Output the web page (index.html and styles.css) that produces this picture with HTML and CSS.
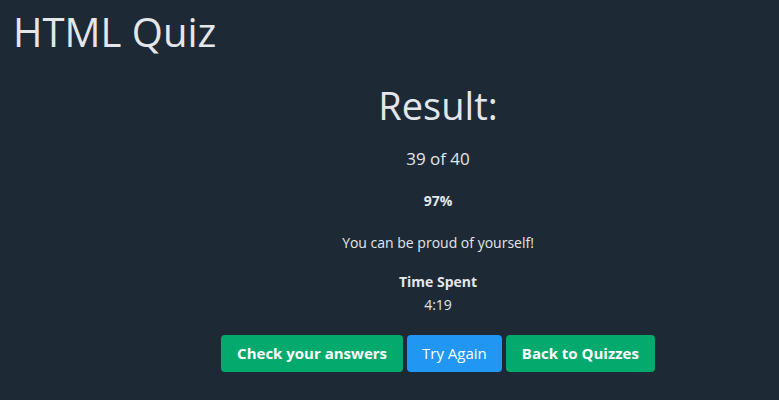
FILE: index.html
```html
<!DOCTYPE html>
<html>
<head>
<meta charset="utf-8">
<link rel="stylesheet" href="styles.css">
</head>
<body>
<div class="page">
  <h1 class="title">HTML Quiz</h1>
  <main class="result">
    <h2 class="result-head">Result:</h2>
    <p class="score">39 of 40</p>
    <p class="percent">97%</p>
    <p class="message">You can be proud of yourself!</p>
    <div class="time">
      <div class="time-label">Time Spent</div>
      <div class="time-value">4:19</div>
    </div>
    <div class="actions">
      <a class="btn btn-green">Check your answers</a>
      <a class="btn btn-blue">Try Again</a>
      <a class="btn btn-green">Back to Quizzes</a>
    </div>
  </main>
</div>
</body>
</html>
```

FILE: styles.css
```css
html, body {
  margin: 0;
  padding: 0;
  background: #1e2936;
  height: 100%;
}
body {
  font-family: "Open Sans", "Noto Sans", sans-serif;
  color: #e3e6ea;
}
.page {
  padding: 0 13px;
}
.title {
  margin: 0;
  padding-top: 6px;
  font-size: 40px;
  font-weight: 400;
  line-height: 52px;
}
.result {
  padding-left: 97px;
  display: flex;
  flex-direction: column;
  align-items: center;
  text-align: center;
}
.result-head {
  margin: 22px 0 0;
  font-size: 38px;
  font-weight: 400;
  line-height: 50px;
}
.score {
  margin: 17px 0 0;
  font-size: 17px;
  line-height: 24px;
}
.percent {
  margin: 20px 0 0;
  font-size: 14px;
  font-weight: 700;
  line-height: 20px;
}
.message {
  margin: 22px 0 0;
  font-size: 14px;
  line-height: 20px;
}
.time {
  margin-top: 17px;
  font-size: 14px;
  line-height: 23px;
}
.time-label {
  font-weight: 700;
}
.actions {
  margin-top: 19px;
  display: flex;
  gap: 4px;
}
.btn {
  display: inline-block;
  padding: 8px 16px;
  border-radius: 4px;
  color: #fff;
  font-size: 15px;
  line-height: 21px;
  font-weight: 700;
}
.btn-green {
  background: #04aa6d;
}
.btn-blue {
  background: #2196f3;
  font-weight: 400;
  padding: 8px 15px;
}
```
